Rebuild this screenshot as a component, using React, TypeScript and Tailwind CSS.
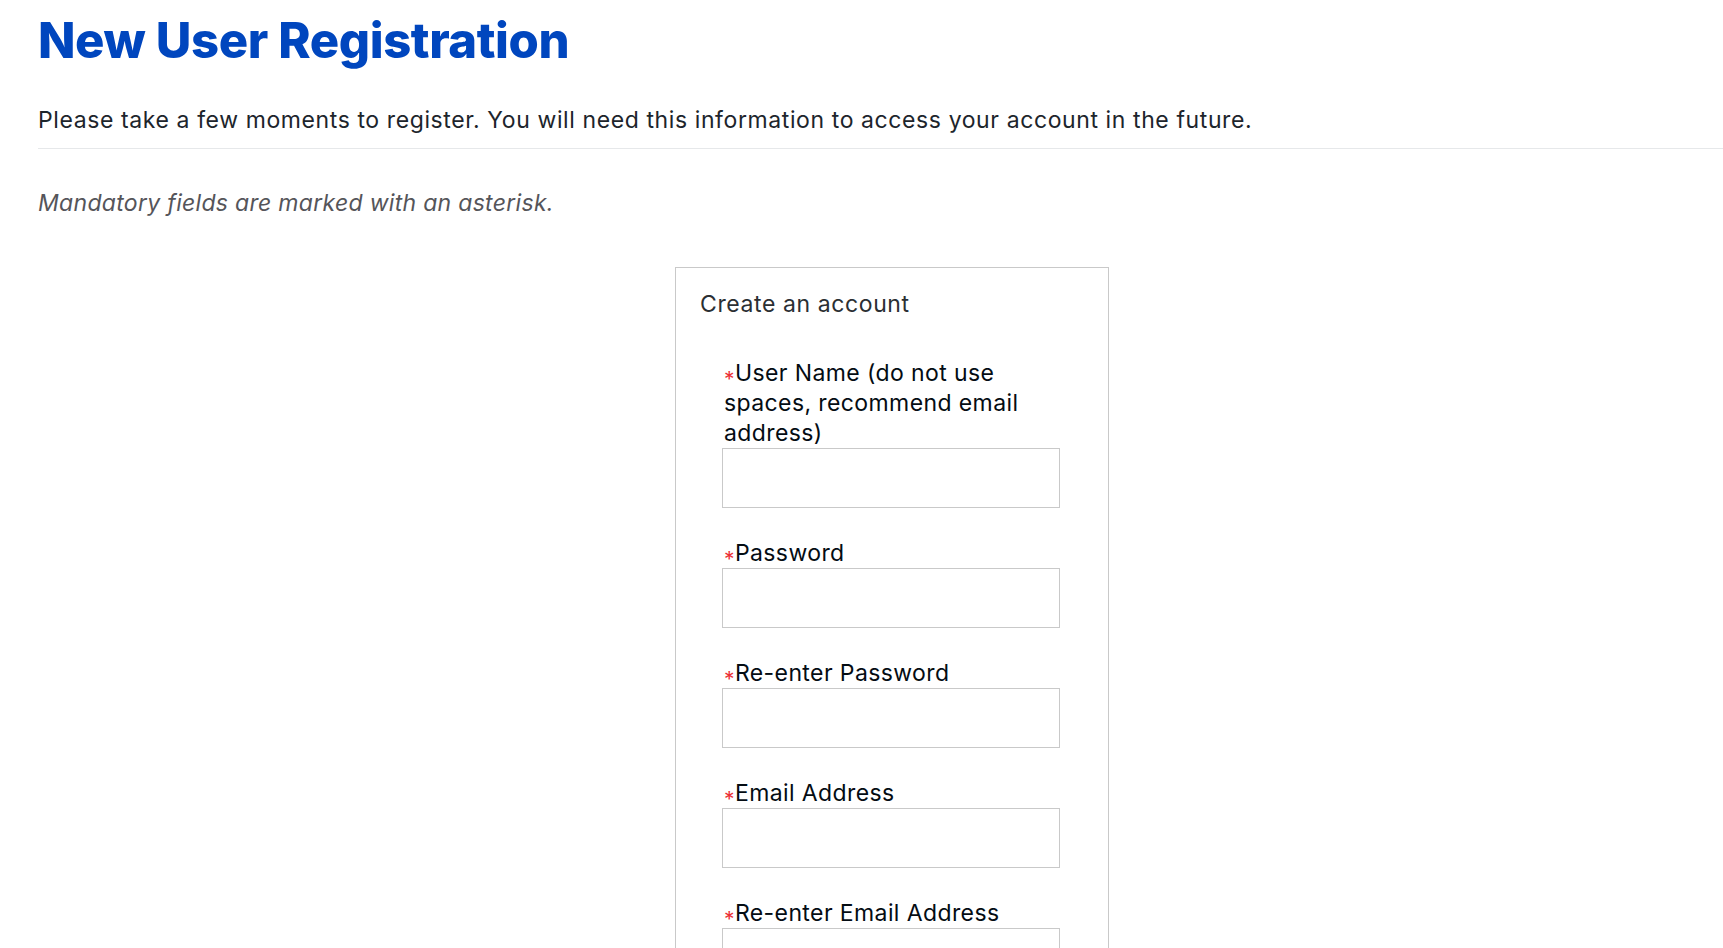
import React from 'react';

const fields = [
  'User Name (do not use spaces, recommend email address)',
  'Password',
  'Re-enter Password',
  'Email Address',
  'Re-enter Email Address',
  'First Name',
];

const Field: React.FC<{ label: string; first?: boolean }> = ({ label, first }) => (
  <div className={first ? '' : 'mt-[30px]'}>
    <label className="block w-[338px] pl-[2px] text-[23px] leading-[30px] tracking-[0.4px] text-[#040c13]">
      <span className="relative top-[6px] text-[21px] leading-none text-[#ec2f35]">*</span>
      {label}
    </label>
    <input
      type="text"
      className="block h-[60px] w-[338px] border border-[#c9c9c9] bg-white px-3 text-[20px] outline-none"
    />
  </div>
);

export default function App() {
  return (
    <div className="min-h-screen bg-white pl-[38px] font-['Inter',sans-serif] text-[#1d252c]">
      <h1 className="mt-[10px] text-[49px] font-extrabold leading-[62px] tracking-[-0.4px] text-[#0046be]">
        New User Registration
      </h1>
      <p className="mt-[33px] border-b border-[#e6e8ea] pb-[13px] text-[23px] leading-[30px] tracking-[0.6px] text-[#1d252c]">
        Please take a few moments to register. You will need this information to access your account in the future.
      </p>
      <p className="mt-[39px] text-[23px] italic leading-[30px] tracking-[0.3px] text-[#55555a]">
        Mandatory fields are marked with an asterisk.
      </p>
      <div className="ml-[637px] mt-[49px] w-[434px] border border-[#c9c9c9] pb-10 pl-[24px] pt-[21px]">
        <h2 className="text-[23px] leading-[30px] tracking-[0.6px] text-[#2b2f33]">Create an account</h2>
        <div className="mt-[39px] pl-[22px]">
          {fields.map((f, i) => (
            <Field key={f} label={f} first={i === 0} />
          ))}
        </div>
      </div>
    </div>
  );
}
